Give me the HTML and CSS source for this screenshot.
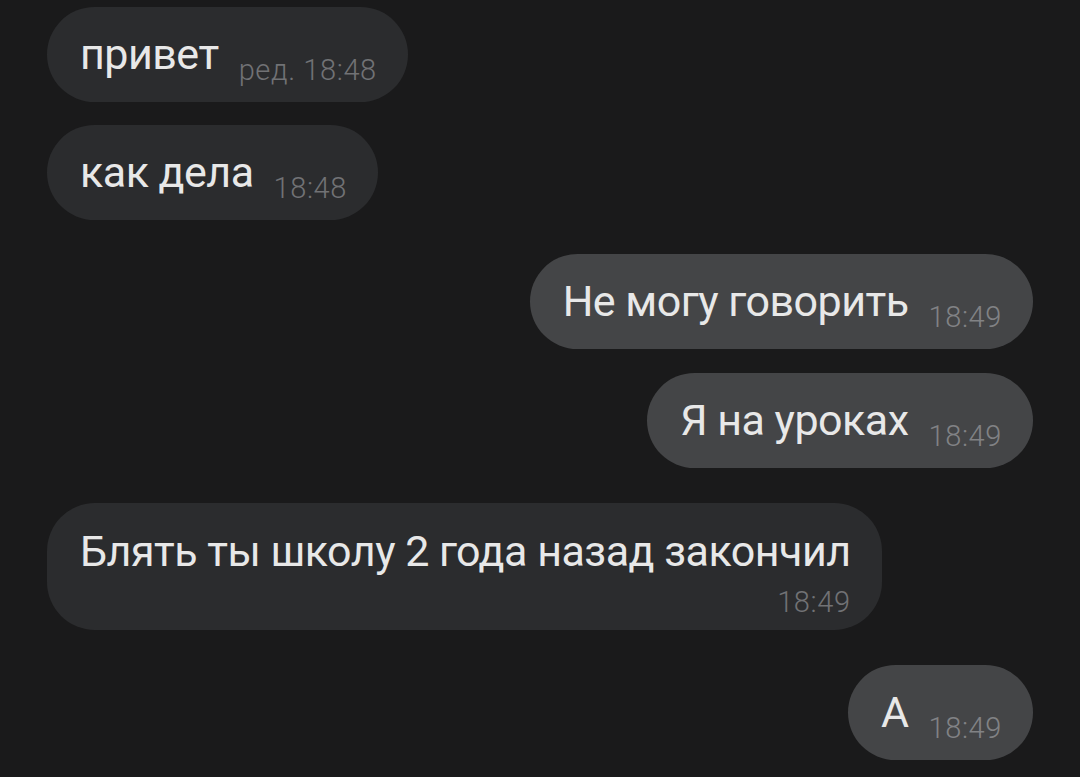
FILE: index.html
```html
<!DOCTYPE html>
<html lang="ru">
<head>
<meta charset="utf-8">
<link rel="stylesheet" href="styles.css">
</head>
<body>
<div class="chat">
  <div class="msg in first"><span class="text">привет</span><span class="time">ред. 18:48</span></div>
  <div class="msg in same"><span class="text">как дела</span><span class="time">18:48</span></div>
  <div class="msg out switch tight"><span class="text">Не могу говорить</span><span class="time">18:49</span></div>
  <div class="msg out same loose"><span class="text">Я на уроках</span><span class="time">18:49</span></div>
  <div class="msg in switch multi"><span class="text">Блять ты школу 2 года назад закончил</span><span class="time">18:49</span></div>
  <div class="msg out switch"><span class="text">А</span><span class="time">18:49</span></div>
</div>
</body>
</html>
```
FILE: styles.css
```css
html, body {
  margin: 0;
  padding: 0;
  background: #1a1a1b;
  height: 100%;
  overflow: hidden;
}
body {
  font-family: Roboto, "Noto Sans", "Liberation Sans", sans-serif;
  color: #e8e8e8;
}
.chat {
  display: flex;
  flex-direction: column;
  padding: 7px 47px 0 47px;
}
.msg {
  height: 95px;
  line-height: 95px;
  border-radius: 48px;
  padding: 0 31px 0 33px;
  white-space: nowrap;
  box-sizing: border-box;
}
.msg.in {
  align-self: flex-start;
  background: #2b2c2e;
}
.msg.out {
  align-self: flex-end;
  background: #444547;
}
.msg.same { margin-top: 23px; }
.msg.same.loose { margin-top: 24px; }
.msg.switch { margin-top: 35px; }
.msg.switch.tight { margin-top: 34px; }
.text {
  font-size: 43px;
  letter-spacing: -0.5px;
}
.time {
  font-size: 29px;
  font-weight: 300;
  letter-spacing: 0.6px;
  margin-left: 20px;
  vertical-align: -11px;
  line-height: 1;
}
.msg.in .time { color: #717275; }
.msg.out .time { color: #818285; }
.msg.multi {
  height: auto;
  line-height: 52px;
  padding: 22px 31px 8px 33px;
  display: flex;
  flex-direction: column;
}
.msg.multi .time {
  display: block;
  text-align: right;
  line-height: 40px;
  margin: 5px 0 0 0;
  vertical-align: baseline;
}
```
